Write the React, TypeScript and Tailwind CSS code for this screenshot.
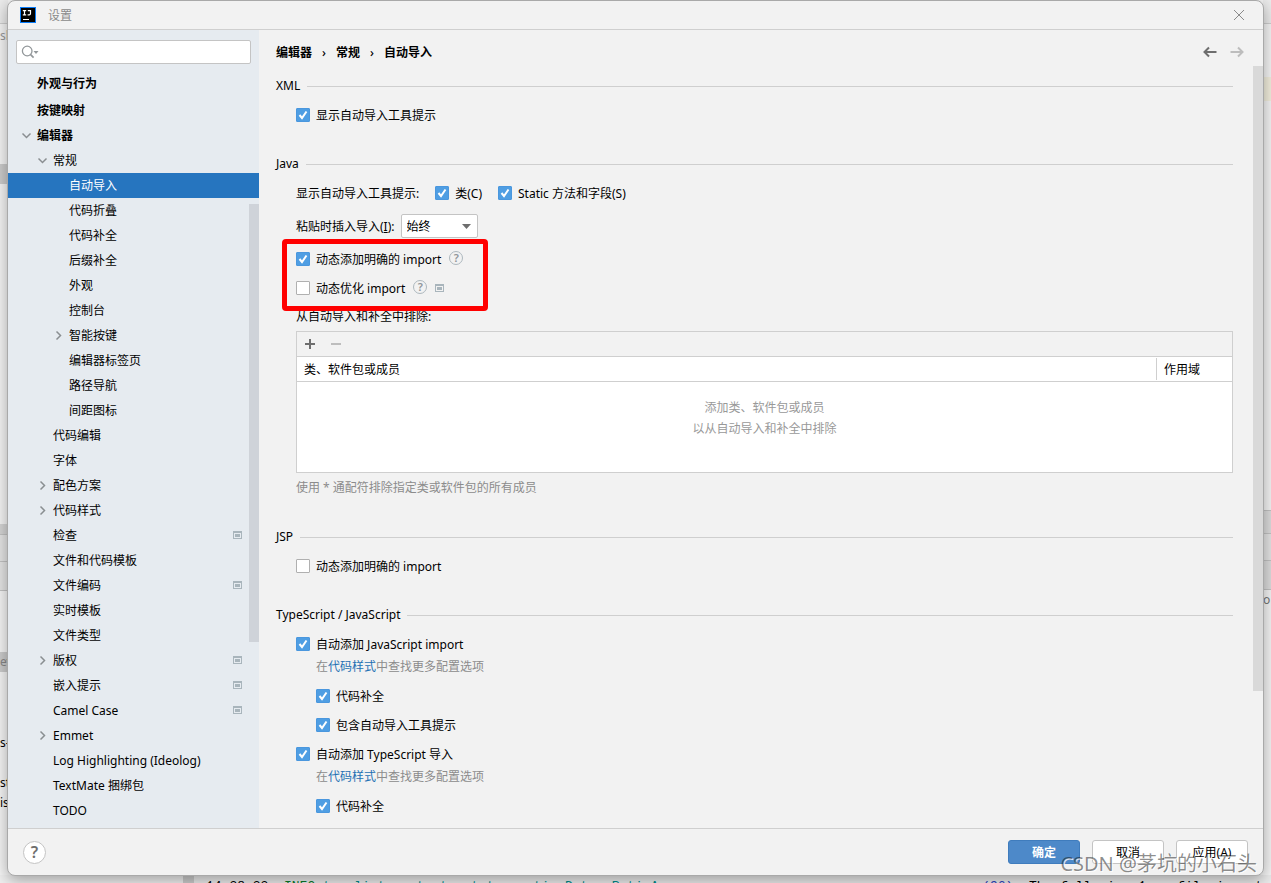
import React from 'react';

type TreeItem = {
  label: string;
  level: 0 | 1 | 2;
  arrow?: 'open' | 'closed';
  project?: boolean;
  selected?: boolean;
};

const tree: TreeItem[] = [
  { label: '外观与行为', level: 0 },
  { label: '按键映射', level: 0 },
  { label: '编辑器', level: 0, arrow: 'open' },
  { label: '常规', level: 1, arrow: 'open' },
  { label: '自动导入', level: 2, selected: true },
  { label: '代码折叠', level: 2 },
  { label: '代码补全', level: 2 },
  { label: '后缀补全', level: 2 },
  { label: '外观', level: 2 },
  { label: '控制台', level: 2 },
  { label: '智能按键', level: 2, arrow: 'closed' },
  { label: '编辑器标签页', level: 2 },
  { label: '路径导航', level: 2 },
  { label: '间距图标', level: 2 },
  { label: '代码编辑', level: 1 },
  { label: '字体', level: 1 },
  { label: '配色方案', level: 1, arrow: 'closed' },
  { label: '代码样式', level: 1, arrow: 'closed' },
  { label: '检查', level: 1, project: true },
  { label: '文件和代码模板', level: 1 },
  { label: '文件编码', level: 1, project: true },
  { label: '实时模板', level: 1 },
  { label: '文件类型', level: 1 },
  { label: '版权', level: 1, arrow: 'closed', project: true },
  { label: '嵌入提示', level: 1, project: true },
  { label: 'Camel Case', level: 1, project: true },
  { label: 'Emmet', level: 1, arrow: 'closed' },
  { label: 'Log Highlighting (Ideolog)', level: 1 },
  { label: 'TextMate 捆绑包', level: 1 },
  { label: 'TODO', level: 1 },
];

const indent = ['pl-[13px] font-bold', 'pl-[29px]', 'pl-[45px]'];

function Chevron({ open }: { open: boolean }) {
  return (
    <svg width="11" height="11" viewBox="0 0 11 11" fill="none" stroke="#8a8e91" strokeWidth="1.5">
      <path d={open ? 'M1.5 3.5 5.5 7.5 9.5 3.5' : 'M3.5 1.5 7.5 5.5 3.5 9.5'} />
    </svg>
  );
}

// Marks a setting that is stored per project
function ProjectIcon() {
  return (
    <svg width="9" height="9" viewBox="0 0 9 9" className="shrink-0">
      <rect x="0.5" y="0.5" width="8" height="7" fill="none" stroke="#a9b5bc" />
      <rect x="0" y="0" width="9" height="2" fill="#a9b5bc" />
      <rect x="2" y="3" width="5" height="3" fill="#a9b5bc" />
    </svg>
  );
}

function HintIcon() {
  return (
    <span className="mb-0.5 flex size-3.5 shrink-0 items-center justify-center rounded-full border border-[#adb8be] text-[11px] leading-3 font-semibold text-[#8f9599]">
      ?
    </span>
  );
}

function Check({ children, checked = false }: { children: React.ReactNode; checked?: boolean }) {
  return (
    <label className="flex h-5 items-center gap-1.5">
      <span className="grid size-3.5 shrink-0">
        <input
          type="checkbox"
          defaultChecked={checked}
          className="peer col-start-1 row-start-1 size-3.5 appearance-none rounded-[1px] border border-[#b0b0b0] bg-white checked:border-[#4a97de] checked:bg-[#4f9ee3]"
        />
        <svg
          viewBox="0 0 14 14"
          fill="none"
          stroke="white"
          strokeWidth="2"
          className="pointer-events-none col-start-1 row-start-1 hidden size-3.5 peer-checked:block"
        >
          <path d="M3.5 7 6 10 10.5 3.5" />
        </svg>
      </span>
      <span className="pt-0.5">{children}</span>
    </label>
  );
}

function Legend({ children }: { children: React.ReactNode }) {
  return (
    <div className="flex h-5 items-center gap-[7px]">
      <h2>{children}</h2>
      <div className="h-px flex-1 bg-[#cfcfcf]" />
    </div>
  );
}

function StyleHint() {
  return (
    <p className="pt-[3px] pl-5 leading-[19px] text-[#8c8c8c]">
      在<a href="#code-style" className="text-[#2470b3]">代码样式</a>中查找更多配置选项
    </p>
  );
}

// The editor window whose edges show around the dialog
function Backdrop() {
  return (
    <div className="absolute inset-0 flex flex-col overflow-hidden bg-[#f6f6f6]" aria-hidden="true">
      <div className="flex flex-1 justify-between">
        <div className="flex w-2 flex-col overflow-hidden whitespace-nowrap">
          <div className="h-6 border-b border-[#cfcfcf] bg-[#ececec]" />
          <div className="h-[140px] pt-0.5 text-[#999]">sl</div>
          <div className="h-5 bg-[#cdcdcd]" />
          <div className="h-[340px]" />
          <div className="h-[11px] border-b border-[#c4c4c4] bg-[#d6d6d6]" />
          <div className="h-[27px] border-b border-[#c4c4c4] bg-[#e6e6e6]" />
          <div className="h-[29px] border-b border-[#c4c4c4] bg-[#e6e6e6]" />
          <div className="h-[61px]" />
          <div className="h-5 bg-[#cdcdcd] text-[#888]">ev</div>
          <div className="h-[61px]" />
          <div className="h-10">s-s</div>
          <div className="h-5">st</div>
          <div className="h-5">is</div>
        </div>
        <div className="flex w-2 flex-col overflow-hidden">
          <div className="h-6 border-b border-[#cfcfcf] bg-[#ececec]" />
          <div className="h-[53px]" />
          <div className="h-6 bg-[#f4f0df]" />
          <div className="h-[409px]" />
          <div className="h-6 border-y border-[#c4c4c4] bg-[#dedede]" />
          <div className="h-[27px] border-b border-[#c4c4c4] bg-[#e6e6e6]" />
          <div className="h-[29px] border-b border-[#c4c4c4] bg-[#dedede]" />
          <div className="h-5 text-[#777]">o</div>
        </div>
      </div>
      <div className="flex h-2 overflow-hidden font-['Liberation_Mono',monospace] text-[13px] leading-5 whitespace-pre">
        <div className="w-[183px] shrink-0 bg-[#f0f0f0]" />
        <div className="w-[11px] shrink-0 bg-[#cccccc]" />
        <div className="flex flex-1 justify-between bg-[#ebebeb] pt-0.5 pr-2 pl-3">
          <span>
            14:38:33  <span className="text-[#0a7a2a]">INFO</span>{' '}
            <span className="text-[#008b8b]">to. list.s.start..rt.t.ner.tio.DataenRatioA</span>
          </span>
          <span>
            <span className="text-[#2a3fc0]">(96)</span>  The following 1 profile is act
          </span>
        </div>
      </div>
    </div>
  );
}

function Sidebar() {
  return (
    <aside className="relative w-[251px] shrink-0 bg-[#e6ebf0] pt-2.5">
      <div className="mx-2 flex h-6 items-center rounded-xs border border-[#c4c4c4] bg-white pl-1">
        <svg width="18" height="16" viewBox="0 0 18 16" fill="none" stroke="#93989b" strokeWidth="1.3">
          <circle cx="6.2" cy="7" r="4.8" />
          <path d="m9.6 10.6 3 3" strokeWidth="1.6" />
          <path d="M12.5 7h5L15 10z" fill="#93989b" stroke="none" />
        </svg>
        <input type="text" aria-label="搜索设置" className="min-w-0 flex-1 outline-none" />
      </div>
      <ul className="mt-[7px]">
        {tree.map((item) => (
          <li key={item.label + item.level} className="first:mb-0.5">
            <a
              href="#settings"
              className={`flex h-[25px] items-center pr-[17px] ${indent[item.level]} ${
                item.selected ? 'bg-[#2675bf] text-white' : ''
              }`}
            >
              <span className="w-4 shrink-0">{item.arrow && <Chevron open={item.arrow === 'open'} />}</span>
              <span className="flex-1">{item.label}</span>
              {item.project && <ProjectIcon />}
            </a>
          </li>
        ))}
      </ul>
      <div className="absolute top-[174px] right-0 h-[438px] w-2.5 bg-[#cfd3d9]" />
    </aside>
  );
}

function ExcludeTable() {
  return (
    <div className="mt-1 border border-[#cfcfcf]">
      <div className="flex h-[25px] items-center gap-3.5 border-b border-[#cfcfcf] pl-[7px]">
        <button type="button" aria-label="添加">
          <svg width="12" height="12" viewBox="0 0 12 12" stroke="#6e6e6e" strokeWidth="2">
            <path d="M6 1v10M1 6h10" />
          </svg>
        </button>
        <button type="button" aria-label="移除">
          <svg width="12" height="12" viewBox="0 0 12 12" stroke="#bdbdbd" strokeWidth="2">
            <path d="M1 6h10" />
          </svg>
        </button>
      </div>
      <table className="w-full border-separate border-spacing-0 bg-white text-left">
        <thead>
          <tr>
            <th className="h-[25px] border-b border-[#cfcfcf] p-0 pl-[7px] font-normal">
              <div className="h-[22px] leading-6">类、软件包或成员</div>
            </th>
            <th className="h-[25px] w-[76px] border-b border-[#cfcfcf] p-0 font-normal">
              <div className="h-[22px] border-l border-[#cfcfcf] pl-[7px] leading-6">作用域</div>
            </th>
          </tr>
        </thead>
        <tbody>
          <tr>
            <td colSpan={2} className="h-[90px] p-0 pt-[15px] text-center align-top leading-[21px] text-[#999]">
              添加类、软件包或成员
              <br />
              以从自动导入和补全中排除
            </td>
          </tr>
        </tbody>
      </table>
    </div>
  );
}

function SettingsPage() {
  return (
    <main className="relative min-w-0 flex-1 pl-[17px]">
      <header className="flex h-11 items-center pr-[19px]">
        <nav className="flex flex-1 items-center pt-0.5 font-bold">
          <a href="#editor">编辑器</a>
          <span className="flex w-6 justify-center font-medium">›</span>
          <a href="#general">常规</a>
          <span className="flex w-6 justify-center font-medium">›</span>
          <span>自动导入</span>
        </nav>
        <div className="flex gap-[13px]">
          <button type="button" aria-label="后退">
            <svg width="14" height="12" viewBox="0 0 14 12" fill="none" stroke="#6e6e6e" strokeWidth="2">
              <path d="M13.5 6H2M6 1.5 1.5 6 6 10.5" />
            </svg>
          </button>
          <button type="button" aria-label="前进">
            <svg width="14" height="12" viewBox="0 0 14 12" fill="none" stroke="#bdbdbd" strokeWidth="2">
              <path d="M.5 6H12M8 1.5 12.5 6 8 10.5" />
            </svg>
          </button>
        </div>
      </header>

      <div className="flex flex-col gap-[29px] pt-0.5 pr-[30px] pb-3">
        <section>
          <Legend>XML</Legend>
          <div className="mt-[9px] pl-5">
            <Check checked>显示自动导入工具提示</Check>
          </div>
        </section>

        <section>
          <Legend>Java</Legend>
          <div className="mt-[9px] pl-5">
            <div className="flex h-5 items-center gap-4">
              <span className="pt-0.5">显示自动导入工具提示:</span>
              <Check checked>类(C)</Check>
              <Check checked>Static 方法和字段(S)</Check>
            </div>
            <div className="mt-[11px] flex h-6 items-center gap-1.5">
              <label htmlFor="insert-imports" className="pt-0.5">
                粘贴时插入导入(<u>I</u>):
              </label>
              <div className="relative">
                <select
                  id="insert-imports"
                  className="block h-6 w-[77px] appearance-none rounded-xs border border-[#c4c4c4] bg-white pt-0.5 pl-[5px]"
                >
                  <option>始终</option>
                  <option>询问</option>
                  <option>从不</option>
                </select>
                <svg width="9" height="5" viewBox="0 0 9 5" className="pointer-events-none absolute top-2.5 right-[7px]">
                  <path d="M0 0h9L4.5 5z" fill="#6e6e6e" />
                </svg>
              </div>
            </div>
            <div className="relative mt-[11px] flex flex-col gap-[9px]">
              <div className="flex items-center gap-2">
                <Check checked>动态添加明确的 import</Check>
                <HintIcon />
              </div>
              <div className="flex items-center gap-2">
                <Check>动态优化 import</Check>
                <HintIcon />
                <ProjectIcon />
              </div>
              <div className="pointer-events-none absolute -top-2.5 -left-3.5 z-10 h-[72px] w-[206px] rounded-sm border-5 border-[#ff0000]" />
            </div>
            <p className="mt-[9px]">从自动导入和补全中排除:</p>
            <ExcludeTable />
            <p className="mt-[5px] text-[#8c8c8c]">使用 * 通配符排除指定类或软件包的所有成员</p>
          </div>
        </section>

        <section>
          <Legend>JSP</Legend>
          <div className="mt-[9px] pl-5">
            <Check>动态添加明确的 import</Check>
          </div>
        </section>

        <section>
          <Legend>TypeScript / JavaScript</Legend>
          <div className="mt-[9px] pl-5">
            <Check checked>自动添加 JavaScript import</Check>
            <StyleHint />
            <div className="mt-2.5 mb-[9px] flex flex-col gap-[9px] pl-5">
              <Check checked>代码补全</Check>
              <Check checked>包含自动导入工具提示</Check>
            </div>
            <Check checked>自动添加 TypeScript 导入</Check>
            <StyleHint />
            <div className="mt-2.5 pl-5">
              <Check checked>代码补全</Check>
            </div>
          </div>
        </section>
      </div>
      <div className="absolute top-9 right-0 h-[625px] w-2.5 bg-[#d9d9d9]" />
    </main>
  );
}

export default function App() {
  return (
    <div className="relative flex min-h-screen flex-col overflow-hidden px-[7px] pb-[7px] font-['Noto_Sans','Noto_Sans_CJK_SC',sans-serif] text-[12px] leading-5 text-black">
      <Backdrop />
      <div className="relative flex flex-1 flex-col overflow-hidden rounded-lg border border-[#a9a9a9] bg-[#f2f2f2] shadow-[0_4px_16px_rgba(0,0,0,0.35)]">
        <div className="flex h-[29px] shrink-0 items-center border-b border-[#cfcfcf] pr-[18px] pl-3">
          <svg width="16" height="16" viewBox="0 0 16 16">
            <rect width="16" height="16" fill="#087cfa" />
            <rect x="1" y="1" width="14" height="14" fill="#000" />
            <path
              d="M2.8 3.7h3.4M2.8 7.8h3.4M4.5 3.7v4.1M7.8 3.7h2.7v2.8q0 1.3-1.3 1.3H7.6"
              fill="none"
              stroke="#fff"
              strokeWidth="1.2"
            />
            <rect x="3" y="12" width="6" height="1" fill="#fff" />
          </svg>
          <h1 className="flex-1 pt-0.5 pl-3 text-[#8a8a8a]">设置</h1>
          <button type="button" aria-label="关闭">
            <svg width="12" height="12" viewBox="0 0 12 12" stroke="#8a8a8a" strokeWidth="1">
              <path d="m1 1 10 10M11 1 1 11" />
            </svg>
          </button>
        </div>

        <div className="flex flex-1">
          <Sidebar />
          <SettingsPage />
        </div>

        <footer className="flex h-[47px] shrink-0 items-center justify-between border-t border-[#cfcfcf] px-[15px]">
          <button
            type="button"
            aria-label="帮助"
            className="flex size-[23px] items-center justify-center rounded-full border border-[#c4c4c4] bg-white text-[16px] font-semibold text-[#6e6e6e]"
          >
            ?
          </button>
          <div className="flex gap-3">
            <button type="button" className="h-6 w-[72px] rounded-[3px] border border-[#3f7cbd] bg-[#4d89c9] pt-0.5 font-bold text-white">
              确定
            </button>
            <button type="button" className="h-6 w-[72px] rounded-[3px] border border-[#c4c4c4] bg-white pt-0.5">
              取消
            </button>
            <button type="button" className="h-6 w-[72px] rounded-[3px] border border-[#c4c4c4] bg-white pt-0.5">
              应用(A)
            </button>
          </div>
        </footer>
      </div>
      <div className="pointer-events-none absolute right-3.5 bottom-[7px] text-[20px] leading-6 text-black/45 [text-shadow:1px_1px_0_rgba(255,255,255,0.8)]">
        CSDN @茅坑的小石头
      </div>
    </div>
  );
}
